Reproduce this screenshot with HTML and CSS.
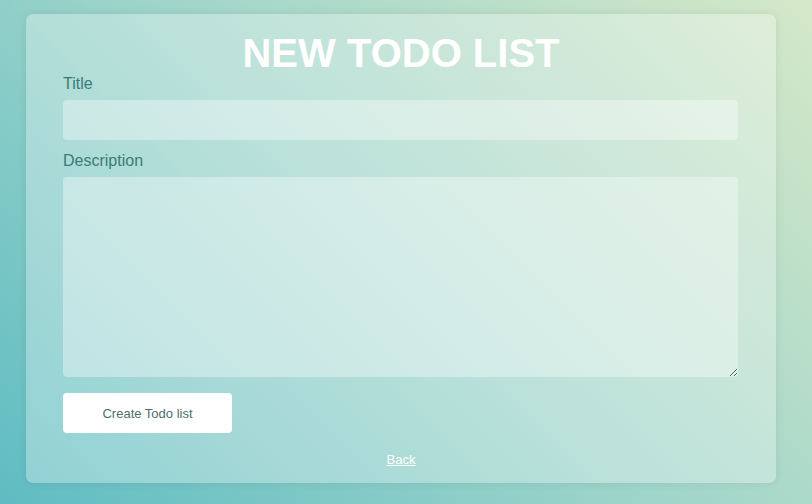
FILE: index.html
```html
<!DOCTYPE html>
<html>
<head>
<meta charset="utf-8">
<link rel="stylesheet" href="styles.css">
</head>
<body>
<div class="page">
  <form class="card">
    <h1 class="heading">NEW TODO LIST</h1>
    <label class="label" for="title">Title</label>
    <input class="field" id="title" type="text">
    <label class="label label-desc" for="desc">Description</label>
    <textarea class="field area" id="desc"></textarea>
    <div class="actions">
      <button class="btn" type="button">Create Todo list</button>
    </div>
    <a class="back" href="#">Back</a>
  </form>
</div>
</body>
</html>
```
FILE: styles.css
```css
html, body {
  margin: 0;
  padding: 0;
  height: 100%;
}
body {
  font-family: "Liberation Sans", Arial, sans-serif;
  background: linear-gradient(45deg, #5fbcc2 0%, #9fd5ca 50%, #d5e8c8 100%);
}
.page {
  box-sizing: border-box;
  height: 504px;
  padding: 14px 36px 0 26px;
}
.card {
  box-sizing: border-box;
  width: 750px;
  height: 469px;
  padding: 19px 37px 0 37px;
  background: rgba(255, 255, 255, 0.3);
  border-radius: 7px;
  box-shadow: 0 0 8px rgba(0, 0, 0, 0.08);
  display: flex;
  flex-direction: column;
}
.heading {
  margin: 0;
  font-size: 40px;
  line-height: 40px;
  font-weight: bold;
  color: #ffffff;
  text-align: center;
  height: 42px;
}
.label {
  font-size: 16px;
  line-height: 18px;
  color: #3c7b76;
  margin-bottom: 7px;
}
.label-desc {
  margin-top: 12px;
  margin-bottom: 7px;
}
.field {
  box-sizing: border-box;
  width: 675px;
  height: 40px;
  border: none;
  border-radius: 4px;
  background: rgba(255, 255, 255, 0.36);
  outline: none;
  padding: 8px 10px;
  font-family: inherit;
  font-size: 14px;
  margin: 0;
}
.area {
  height: 200px;
  display: block;
}
.actions {
  margin-top: 16px;
  display: flex;
}
.btn {
  width: 169px;
  height: 40px;
  border: none;
  border-radius: 4px;
  background: #ffffff;
  color: #4b6f6c;
  font-family: inherit;
  font-size: 13px;
  padding: 0;
}
.back {
  margin-top: 19px;
  align-self: center;
  font-size: 13px;
  line-height: 15px;
  color: #ffffff;
  text-decoration: underline;
}
```
